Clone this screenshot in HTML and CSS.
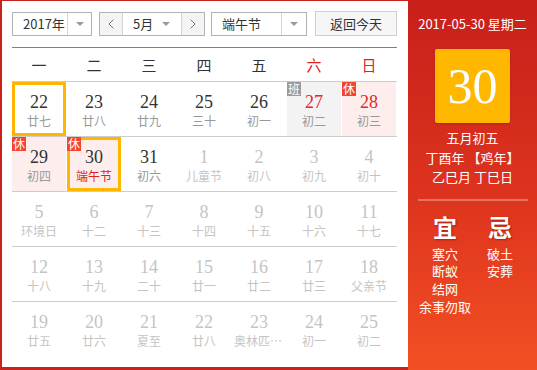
FILE: index.html
```html
<!DOCTYPE html>
<html lang="zh-CN">
<head>
<meta charset="utf-8">
<title>万年历</title>
<link rel="stylesheet" href="styles.css">
</head>
<body>
<div class="cal">
  <div class="main">
    <div class="toolbar">
      <div class="sel year"><span class="val">2017年</span><span class="arr"><i class="tri"></i></span></div>
      <div class="sel month">
        <span class="nav"><svg width="6" height="10" viewBox="0 0 6 10"><polyline points="5.5,0.5 1,5 5.5,9.5" fill="none" stroke="#777" stroke-width="1"/></svg></span>
        <span class="mid"><span>5月</span><i class="tri"></i></span>
        <span class="nav"><svg width="6" height="10" viewBox="0 0 6 10"><polyline points="0.5,0.5 5,5 0.5,9.5" fill="none" stroke="#777" stroke-width="1"/></svg></span>
      </div>
      <div class="sel hol"><span class="val">端午节</span><span class="arr"><i class="tri"></i></span></div>
      <button class="today-btn">返回今天</button>
    </div>
    <div class="redline"></div>
    <div class="weekdays">
      <span>一</span><span>二</span><span>三</span><span>四</span><span>五</span><span class="we">六</span><span class="we">日</span>
    </div>
    <div class="week">
      <div class="d boxed"><span class="n">22</span><span class="l">廿七</span></div>
      <div class="d"><span class="n">23</span><span class="l">廿八</span></div>
      <div class="d"><span class="n">24</span><span class="l">廿九</span></div>
      <div class="d"><span class="n">25</span><span class="l">三十</span></div>
      <div class="d"><span class="n">26</span><span class="l">初一</span></div>
      <div class="d work"><i class="badge grey">班</i><span class="n red">27</span><span class="l">初二</span></div>
      <div class="d rest"><i class="badge">休</i><span class="n red">28</span><span class="l">初三</span></div>
    </div>
    <div class="week">
      <div class="d rest"><i class="badge">休</i><span class="n">29</span><span class="l">初四</span></div>
      <div class="d rest boxed"><i class="badge">休</i><span class="n">30</span><span class="l red">端午节</span></div>
      <div class="d"><span class="n">31</span><span class="l">初六</span></div>
      <div class="d other"><span class="n">1</span><span class="l">儿童节</span></div>
      <div class="d other"><span class="n">2</span><span class="l">初八</span></div>
      <div class="d other"><span class="n">3</span><span class="l">初九</span></div>
      <div class="d other"><span class="n">4</span><span class="l">初十</span></div>
    </div>
    <div class="week">
      <div class="d other"><span class="n">5</span><span class="l">环境日</span></div>
      <div class="d other"><span class="n">6</span><span class="l">十二</span></div>
      <div class="d other"><span class="n">7</span><span class="l">十三</span></div>
      <div class="d other"><span class="n">8</span><span class="l">十四</span></div>
      <div class="d other"><span class="n">9</span><span class="l">十五</span></div>
      <div class="d other"><span class="n">10</span><span class="l">十六</span></div>
      <div class="d other"><span class="n">11</span><span class="l">十七</span></div>
    </div>
    <div class="week">
      <div class="d other"><span class="n">12</span><span class="l">十八</span></div>
      <div class="d other"><span class="n">13</span><span class="l">十九</span></div>
      <div class="d other"><span class="n">14</span><span class="l">二十</span></div>
      <div class="d other"><span class="n">15</span><span class="l">廿一</span></div>
      <div class="d other"><span class="n">16</span><span class="l">廿二</span></div>
      <div class="d other"><span class="n">17</span><span class="l">廿三</span></div>
      <div class="d other"><span class="n">18</span><span class="l">父亲节</span></div>
    </div>
    <div class="week last">
      <div class="d other"><span class="n">19</span><span class="l">廿五</span></div>
      <div class="d other"><span class="n">20</span><span class="l">廿六</span></div>
      <div class="d other"><span class="n">21</span><span class="l">夏至</span></div>
      <div class="d other"><span class="n">22</span><span class="l">廿八</span></div>
      <div class="d other"><span class="n">23</span><span class="l">奥林匹克日</span></div>
      <div class="d other"><span class="n">24</span><span class="l">初一</span></div>
      <div class="d other"><span class="n">25</span><span class="l">初二</span></div>
    </div>
  </div>
  <div class="side">
    <div class="date">2017-05-30 星期二</div>
    <div class="big">30</div>
    <div class="lunar">
      <div>五月初五</div>
      <div>丁酉年 【鸡年】</div>
      <div>乙巳月 丁巳日</div>
    </div>
    <div class="divider"></div>
    <div class="yiji">
      <div class="col">
        <div class="head">宜</div>
        <div class="items"><div>塞穴</div><div>断蚁</div><div>结网</div><div>余事勿取</div></div>
      </div>
      <div class="col">
        <div class="head">忌</div>
        <div class="items"><div>破土</div><div>安葬</div></div>
      </div>
    </div>
  </div>
</div>
</body>
</html>
```

FILE: styles.css
```css
* { box-sizing: border-box; margin: 0; padding: 0; }

body {
  width: 537px;
  height: 370px;
  overflow: hidden;
  background: #fff;
  font-family: "Noto Sans CJK SC", "Noto Sans", sans-serif;
  color: #333;
}

.cal {
  display: flex;
  height: 370px;
}

.main {
  width: 408px;
  flex: none;
  border-top: 1px solid #c9201b;
  border-left: 2px solid #cc221c;
  border-bottom: 3px solid #cc221c;
  padding: 10px 11px 0 10px;
  background: #fff;
}

/* toolbar */
.toolbar {
  display: flex;
  align-items: flex-start;
  height: 25px;
}

.sel {
  display: flex;
  height: 24px;
  margin-top: 1px;
  border: 1px solid #b2b2b2;
  font-size: 13px;
  line-height: 22px;
  color: #333;
  background: #fff;
}

.val {
  display: flex;
  align-items: center;
  padding-left: 10px;
}

.arr {
  width: 24px;
  border-left: 1px solid #d6d6d6;
  display: flex;
  align-items: center;
  justify-content: center;
}

.tri {
  display: block;
  width: 0;
  height: 0;
  border-left: 4px solid transparent;
  border-right: 4px solid transparent;
  border-top: 4px solid #9a9a9a;
}

.year { width: 80px; }
.year .val { width: 54px; }

.month {
  width: 106px;
  margin-left: 7px;
}

.nav {
  width: 22px;
  background: #f4f4f4;
  display: flex;
  align-items: center;
  justify-content: center;
}

.mid {
  width: 60px;
  border-left: 1px solid #d6d6d6;
  border-right: 1px solid #d6d6d6;
  display: flex;
  align-items: center;
  justify-content: space-between;
  padding: 0 11px 0 10px;
}

.hol {
  width: 96px;
  margin-left: 6px;
}
.hol .val { width: 69px; }

.today-btn {
  width: 82px;
  height: 25px;
  margin-left: 8px;
  border: 1px solid #cfcfcf;
  background: #f6f6f6;
  font-family: inherit;
  font-size: 13px;
  color: #333;
}

.redline {
  height: 1px;
  margin-top: 11px;
  background: #e35849;
}

/* grid */
.weekdays {
  display: grid;
  grid-template-columns: repeat(7, 54px);
  column-gap: 1px;
  height: 34px;
  border-bottom: 1px solid #cccccc;
  font-size: 15px;
  line-height: 33px;
  text-align: center;
  color: #333;
}
.weekdays .we { color: #e0241d; }

.week {
  display: grid;
  grid-template-columns: repeat(7, 54px);
  column-gap: 1px;
  border-bottom: 1px solid #cccccc;
}
.week.last { border-bottom: none; }

.d {
  position: relative;
  height: 54px;
  padding-top: 10px;
  text-align: center;
}

.n {
  display: block;
  font-family: "Liberation Serif", "Times New Roman", serif;
  font-size: 18px;
  line-height: 20px;
  color: #333;
}

.l {
  display: block;
  padding: 0 2px;
  font-size: 12px;
  line-height: 18px;
  color: #999;
  white-space: nowrap;
  overflow: hidden;
  text-overflow: ellipsis;
}

.n.red { color: #e5262a; }
.l.red { color: #e2201b; }

.other .n,
.other .l { color: #c4c4c4; }

.rest { background: #fdeeed; }
.work { background: #f3f3f3; }

.boxed::after {
  content: "";
  position: absolute;
  inset: 0;
  border: 3px solid #ffb600;
}

.badge {
  position: absolute;
  top: 0;
  left: 0;
  z-index: 2;
  width: 14px;
  height: 14px;
  font-style: normal;
  font-size: 12px;
  line-height: 14px;
  text-align: center;
  color: #fff;
  background: #f4442f;
}
.badge.grey { background: #9a9a9a; }

/* side panel */
.side {
  flex: 1;
  background: linear-gradient(to bottom, #c81f1b 0%, #dc321e 50%, #f34f23 100%);
  color: #fff;
  text-align: center;
  padding-top: 15px;
}

.date {
  font-size: 13px;
  line-height: 18px;
}

.big {
  width: 75px;
  height: 74px;
  margin: 16px auto 0;
  background: #ffb700;
  border-radius: 2px;
  box-shadow: 0 1px 2px rgba(120, 20, 0, 0.35);
  font-family: "Liberation Serif", "Times New Roman", serif;
  font-size: 50px;
  line-height: 74px;
  color: #fff;
}

.lunar {
  margin-top: 5px;
  font-size: 13px;
  line-height: 19.5px;
}

.divider {
  width: 110px;
  height: 2px;
  margin: 12px auto 0;
  background: rgba(255, 255, 255, 0.3);
}

.yiji {
  display: flex;
  width: 110px;
  margin: 0 auto;
}

.col {
  width: 55px;
}

.head {
  margin-top: 11px;
  font-size: 24px;
  line-height: 30px;
  font-weight: bold;
  text-shadow: 1px 1px 2px rgba(90, 0, 0, 0.45);
}

.items {
  margin-top: 3px;
  font-size: 13px;
  line-height: 17.7px;
}
```
